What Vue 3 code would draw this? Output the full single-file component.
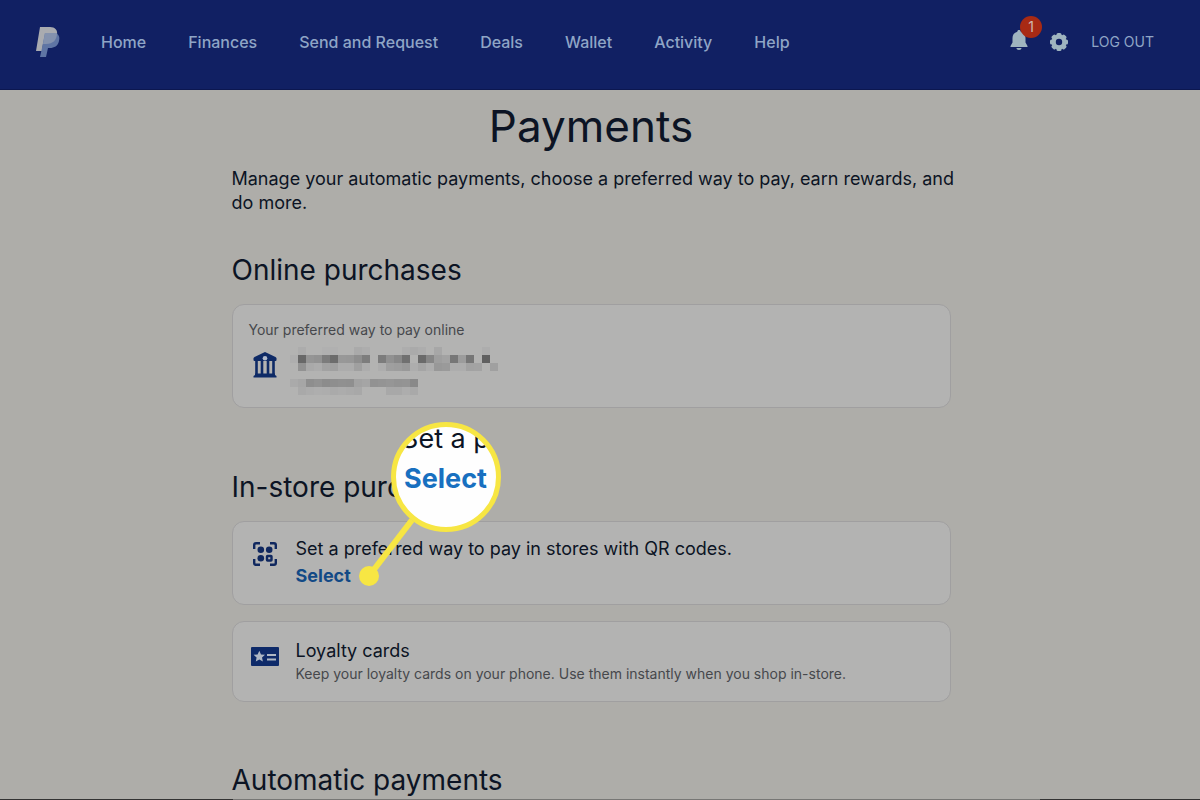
<script setup>
const links = ['Home', 'Finances', 'Send and Request', 'Deals', 'Wallet', 'Activity', 'Help']

// Two hex digits give a cell's grey level, ".." leaves the cell empty
const hiddenRows = [
  '.. ac .. .. b0 b0 .. .. aa ad .. .. .. .. ad aa ad .. a7 .. .. .. .. .. ad ..',
  'ae 68 95 92 7c 6c 98 97 8e 7d .. 7c 91 88 70 .. 6a 86 9e a2 77 9c 76 .. 60 ..',
  '.. 92 a9 ac a2 a0 ac ac a0 ad .. ad 9f 9d 99 ad a5 ad 98 9a ad ad a2 a3 .. a0',
  '.. .. .. .. .. .. .. .. .. .. .. .. .. .. .. .. .. .. .. .. .. .. .. .. .. ..',
  'aa a6 8e 92 8c 8e 90 8f a2 a5 92 94 96 93 94 89 .. .. .. .. .. .. .. .. .. ..',
  '.. a9 ac ae ad aa ac aa a8 .. .. .. a8 a8 ad a9 .. .. .. .. .. .. .. .. .. ..'
]
const cells = hiddenRows.flatMap((row) =>
  row.split(' ').map((v) => (v === '..' ? 'transparent' : `#${v}${v}${v}`))
)
</script>

<template>
  <div class="page">
    <header class="bar">
      <a class="logo" href="#" aria-label="PayPal">
        <svg width="26" height="32" viewBox="0 0 26 32" aria-hidden="true">
          <path d="M5 1h10c5 0 8 3 7 8-1 6-5 9-11 9H8l-1 7H1z" fill="#a9abb0" />
          <path d="M10 7h10c4 1 5 4 4 8-1 5-5 7-9 7h-2l-2 9H5l2-9z" fill="#5f75a4" />
          <path d="M10 7h12c0 7-4 11-11 11H8z" fill="#8492ae" />
        </svg>
      </a>
      <nav>
        <a v-for="l in links" :key="l" href="#">{{ l }}</a>
      </nav>
      <div class="tools">
        <button class="bell" type="button" aria-label="Notifications">
          <svg width="18" height="22" viewBox="0 0 18 22" aria-hidden="true">
            <path d="M9 1c1 0 1.700.7 1.700 1.700C14 3.500 15.500 6 15.500 9v4.500L17.500 17v1H.5v-1l2-3.500V9c0-3 1.500-5.500 4.800-6.300C7.300 1.700 8 1 9 1zM6.500 19h5c0 1.300-1 2-2.500 2s-2.500-.7-2.500-2z" fill="#9fb4bf" />
          </svg>
          <span class="badge">1</span>
        </button>
        <button class="gear" type="button" aria-label="Settings">
          <svg width="20" height="20" viewBox="0 0 20 20" aria-hidden="true">
            <g fill="#9fb4bf">
              <rect x="7.500" y="1" width="5" height="18" rx="1.500" />
              <rect x="7.500" y="1" width="5" height="18" rx="1.500" transform="rotate(45 10 10)" />
              <rect x="7.500" y="1" width="5" height="18" rx="1.500" transform="rotate(90 10 10)" />
              <rect x="7.500" y="1" width="5" height="18" rx="1.500" transform="rotate(135 10 10)" />
              <circle cx="10" cy="10" r="7.500" />
            </g>
            <circle cx="10" cy="10" r="3.200" fill="#112063" />
          </svg>
        </button>
        <a class="logout" href="#">LOG OUT</a>
      </div>
    </header>

    <main>
      <div class="column">
        <h1>Payments</h1>
        <p class="intro">Manage your automatic payments, choose a preferred way to pay, earn rewards, and do more.</p>

        <section>
          <h2>Online purchases</h2>
          <div class="card online">
            <p class="note">Your preferred way to pay online</p>
            <div class="method">
              <svg class="bank" width="24" height="26" viewBox="0 0 24 26" aria-hidden="true">
                <path d="M12 0l10.500 5q1 .5 1 1.500v1.500q0 1-1 1h-21q-1 0-1-1V6.500q0-1 1-1.500z" fill="#0e2a66" />
                <path d="M3.500 9v13M9 9v13M15 9v13M20.500 9v13" stroke="#0e2a66" stroke-width="2.600" />
                <path d="M2 21.500h20v1.500l1.500 1v1.500H.5V24L2 23z" fill="#0e2a66" />
                <circle cx="12" cy="6.300" r="2.300" fill="#b3bccc" />
              </svg>
              <div class="mosaic" aria-hidden="true">
                <span v-for="(c, i) in cells" :key="i" :style="{ background: c }"></span>
              </div>
            </div>
          </div>
        </section>

        <section class="store">
          <h2>In-store purchases</h2>
          <div class="card row qr">
            <svg width="26" height="26" viewBox="0 0 26 26" aria-hidden="true">
              <g fill="none" stroke="#10285f" stroke-width="2.400">
                <path d="M2.200 8V4q0-1.800 1.800-1.800h4M18 2.200h4q1.800 0 1.800 1.800v4M23.800 18v4q0 1.800-1.800 1.800h-4M8 23.800H4q-1.800 0-1.800-1.800v-4" />
                <rect x="15" y="15" width="4.500" height="4.500" rx=".5" />
              </g>
              <g fill="#10285f">
                <circle cx="8.800" cy="8.800" r="3.300" />
                <circle cx="17.200" cy="8.800" r="3.300" />
                <circle cx="8.800" cy="17.200" r="3.300" />
              </g>
            </svg>
            <div>
              <p class="title">Set a preferred way to pay in stores with QR codes.</p>
              <a class="select" href="#">Select</a>
            </div>
          </div>
          <div class="card row loyalty">
            <svg width="28" height="20" viewBox="0 0 28 20" aria-hidden="true">
              <rect x="0" y="0" width="28" height="19" rx="1" fill="#0e2a69" />
              <path d="M8.300 3.700l1.700 3.700 4 .4-3 2.700.9 4-3.600-2.100-3.500 2.100.8-4-3-2.700 4-.4z" fill="#aeb7c4" />
              <path d="M16 8h9M16 12.500h9" stroke="#aeb7c4" stroke-width="2" />
            </svg>
            <div>
              <p class="title">Loyalty cards</p>
              <p class="note">Keep your loyalty cards on your phone. Use them instantly when you shop in-store.</p>
            </div>
          </div>

          <div class="callout" aria-hidden="true">
            <svg width="144" height="166" viewBox="0 0 144 166">
              <path d="M55 98L12 154" stroke="#f7e643" stroke-width="6" />
              <circle cx="12" cy="154" r="10" fill="#f7e643" />
            </svg>
            <div class="lens">
              <span class="lens-title">Set a p</span>
              <span class="lens-link">Select</span>
            </div>
          </div>
        </section>

        <section>
          <h2>Automatic payments</h2>
        </section>
      </div>
    </main>
    <div class="edge"><i></i></div>
  </div>
</template>

<style>
body {
  margin: 0;
  background: #aeada9;
}
</style>

<style scoped>
.page {
  height: 100vh;
  display: flex;
  flex-direction: column;
  overflow: hidden;
  background: #aeada9;
  color: #0c1424;
  font-family: Inter, "Liberation Sans", sans-serif;
}
h1, h2, p {
  margin: 0;
  font-weight: 400;
}
a {
  text-decoration: none;
}
button {
  padding: 0;
  border: 0;
  background: none;
  font: inherit;
}
svg {
  display: block;
  flex: none;
}
.bar {
  flex: none;
  box-sizing: border-box;
  height: 90px;
  padding: 0 46px 6px 35px;
  display: flex;
  align-items: center;
  background: #112063;
  border-bottom: 1px solid #0c1750;
}
.logo {
  margin-right: 40px;
}
nav {
  display: flex;
  gap: 42px;
}
nav a {
  color: #8fa5c6;
  font-size: 16px;
  font-weight: 500;
  line-height: 24px;
}
.tools {
  margin-left: auto;
  display: flex;
  align-items: center;
}
.bell {
  position: relative;
  margin: 0 21px 3px 0;
}
.badge {
  position: absolute;
  left: 10px;
  top: -13px;
  width: 22px;
  border-radius: 50%;
  background: #a82a14;
  color: #d0b8b0;
  font-size: 14px;
  line-height: 22px;
  text-align: center;
}
.gear {
  margin-right: 22px;
}
.logout {
  color: #8fa5c6;
  font-size: 14px;
  line-height: 20px;
}
main {
  flex: 1;
  min-height: 0;
  overflow: hidden;
  padding-right: 18px;
}
.column {
  max-width: 719px;
  margin: 0 auto;
}
h1 {
  padding-top: 9px;
  font-size: 44px;
  line-height: 54px;
  text-align: center;
}
.intro {
  margin: 14px -16px 37px 0;
  font-size: 18px;
  line-height: 24px;
}
h2 {
  margin-bottom: 16px;
  font-size: 28px;
  line-height: 36px;
}
.card {
  box-sizing: border-box;
  background: #b3b3b2;
  border: 1px solid #a09fa0;
  border-radius: 12px;
}
.online {
  height: 104px;
  padding: 16px;
}
.note {
  color: #46484c;
  font-size: 14px;
  line-height: 18px;
}
.method {
  display: flex;
  padding: 8px 0 0 4px;
}
.bank {
  margin: 5px 13px 0 0;
}
.mosaic {
  display: grid;
  grid-template-columns: repeat(26, 8px);
  grid-auto-rows: 8px;
}
.store {
  position: relative;
  margin: 61px 0 60px;
}
.row {
  display: flex;
}
.title {
  font-size: 18px;
  line-height: 24px;
}
.qr {
  height: 84px;
  padding: 15px 19px;
  gap: 18px;
  margin-bottom: 16px;
}
.qr svg {
  margin-top: 4px;
}
.select {
  color: #134a86;
  font-size: 18px;
  font-weight: 700;
  line-height: 30px;
}
.loyalty {
  height: 81px;
  padding: 17px 18px;
  gap: 17px;
}
.loyalty svg {
  margin-top: 8px;
}
.loyalty .note {
  margin-top: 2px;
}
.callout {
  position: absolute;
  left: 125px;
  top: -47px;
}
.lens {
  position: absolute;
  left: 34px;
  top: 0;
  box-sizing: border-box;
  width: 110px;
  height: 110px;
  border: 5px solid #f7e643;
  border-radius: 50%;
  background: #fefefe;
  overflow: hidden;
  text-align: center;
  font-size: 27px;
  line-height: 40px;
  white-space: nowrap;
}
.lens span {
  display: block;
}
.lens-title {
  margin-top: -8px;
}
.lens-link {
  color: #1870c0;
  font-weight: 700;
}
.edge {
  flex: none;
  height: 1px;
  display: flex;
  padding: 0 160px 0 233px;
  background: #333333;
}
.edge i {
  flex: 1;
  background: #777775;
}
</style>
